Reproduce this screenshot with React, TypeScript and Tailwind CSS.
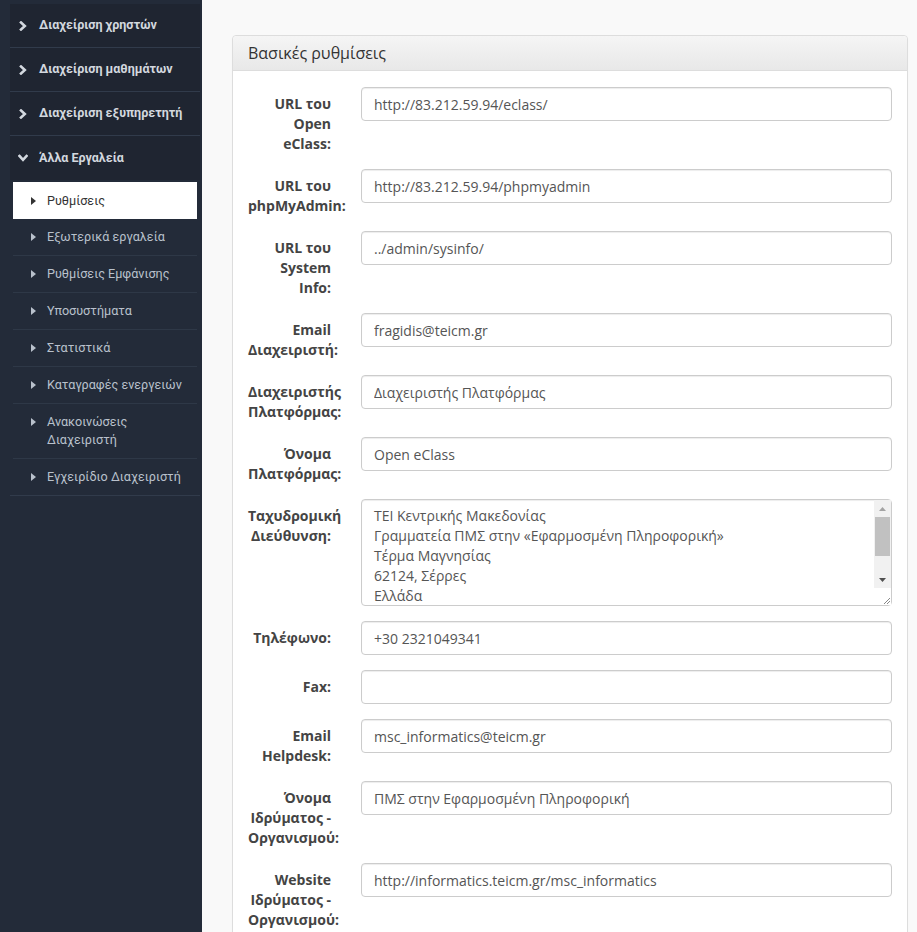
import React from "react";

const font = { fontFamily: '"Open Sans", "Noto Sans", sans-serif' };
const sideFont = { fontFamily: 'Roboto, "Open Sans", sans-serif' };

function Chevron({ down }: { down?: boolean }) {
  return (
    <svg width="10" height="10" viewBox="0 0 10 10" className="shrink-0">
      {down ? (
        <polyline points="1.5,3 5,6.8 8.5,3" fill="none" stroke="#d3d8df" strokeWidth="2.6" strokeLinecap="square" />
      ) : (
        <polyline points="3,1.5 6.8,5 3,8.5" fill="none" stroke="#d3d8df" strokeWidth="2.6" strokeLinecap="square" />
      )}
    </svg>
  );
}

function Caret({ dark }: { dark?: boolean }) {
  return (
    <svg width="5" height="8" viewBox="0 0 5 8" className="shrink-0 mt-[5px]">
      <polygon points="0,0 5,4 0,8" fill={dark ? "#333" : "#b9c1cc"} />
    </svg>
  );
}

const topItems = ["Διαχείριση χρηστών", "Διαχείριση μαθημάτων", "Διαχείριση εξυπηρετητή"];
const subItems = [
  "Ρυθμίσεις",
  "Εξωτερικά εργαλεία",
  "Ρυθμίσεις Εμφάνισης",
  "Υποσυστήματα",
  "Στατιστικά",
  "Καταγραφές ενεργειών",
  "Ανακοινώσεις Διαχειριστή",
  "Εγχειρίδιο Διαχειριστή",
];

const fields = [
  { label: "URL του Open eClass:", value: "http://83.212.59.94/eclass/" },
  { label: "URL του phpMyAdmin:", value: "http://83.212.59.94/phpmyadmin" },
  { label: "URL του System Info:", value: "../admin/sysinfo/" },
  { label: "Email Διαχειριστή:", value: "fragidis@teicm.gr" },
  { label: "Διαχειριστής Πλατφόρμας:", value: "Διαχειριστής Πλατφόρμας" },
  { label: "Όνομα Πλατφόρμας:", value: "Open eClass" },
  {
    label: "Ταχυδρομική Διεύθυνση:",
    value: "ΤΕΙ Κεντρικής Μακεδονίας\nΓραμματεία ΠΜΣ στην «Εφαρμοσμένη Πληροφορική»\nΤέρμα Μαγνησίας\n62124, Σέρρες\nΕλλάδα",
    area: true,
  },
  { label: "Τηλέφωνο:", value: "+30 2321049341" },
  { label: "Fax:", value: "" },
  { label: "Email Helpdesk:", value: "msc_informatics@teicm.gr" },
  { label: "Όνομα Ιδρύματος - Οργανισμού:", value: "ΠΜΣ στην Εφαρμοσμένη Πληροφορική" },
  { label: "Website Ιδρύματος - Οργανισμού:", value: "http://informatics.teicm.gr/msc_informatics" },
];

// fake classic scrollbar drawn over the textarea's right side
function FakeScrollbar() {
  return (
    <div className="absolute right-[1px] top-[1px] bottom-[1px] w-[17px] flex flex-col">
      <div className="flex-1 bg-[#f1f1f1] flex flex-col items-center">
        <div className="h-[17px] flex items-center justify-center">
          <svg width="7" height="4" viewBox="0 0 7 4">
            <polygon points="0,4 3.5,0 7,4" fill="#a3a3a3" />
          </svg>
        </div>
        <div className="w-[15px] h-[39px] bg-[#c1c1c1]" />
        <div className="flex-1" />
        <div className="h-[17px] flex items-center justify-center">
          <svg width="7" height="4" viewBox="0 0 7 4">
            <polygon points="0,0 3.5,4 7,0" fill="#505050" />
          </svg>
        </div>
      </div>
      <div className="h-[17px] bg-white flex items-end justify-end">
        <svg width="9" height="9" viewBox="0 0 9 9">
          <line x1="2" y1="8" x2="8" y2="2" stroke="#888" strokeWidth="1" />
          <line x1="5" y1="8" x2="8" y2="5" stroke="#888" strokeWidth="1" />
        </svg>
      </div>
    </div>
  );
}

export default function App() {
  return (
    <div className="flex h-[932px] w-[917px] overflow-hidden bg-[#f9f9f9]" style={font}>
      {/* sidebar */}
      <div className="w-[202px] shrink-0 bg-[#232b39] pt-[4px] px-[10px] pr-[2px]" style={sideFont}>
        {topItems.map((t) => (
          <div key={t} className="flex items-center h-[44px] bg-[#1f2531] border-b border-[#313b4b] pl-[8px] gap-[11px]">
            <Chevron />
            <span className="text-[12.5px] font-bold text-[#d3d8df]">{t}</span>
          </div>
        ))}
        <div className="flex items-center h-[44px] bg-[#1f2531] pl-[8px] gap-[11px]">
          <Chevron down />
          <span className="text-[12.5px] font-bold text-[#d3d8df]">Άλλα Εργαλεία</span>
        </div>
        <div className="pt-[2px] border-b border-[#313b4b]">
          {subItems.map((s, i) => (
            <div
              key={s}
              className={
                i === 0
                  ? "mx-[3px] flex gap-[11px] bg-white pl-[18px] pr-[8px] py-[10px] leading-[17px]"
                  : "mx-[3px] flex gap-[11px] border-b border-[#2e3847] last:border-b-0 pl-[18px] pr-[8px] py-[9px] leading-[18px]"
              }
            >
              <Caret dark={i === 0} />
              <span className={i === 0 ? "text-[12.6px] text-[#333]" : "text-[12.6px] text-[#b9c1cc]"}>
                {s === "Ανακοινώσεις Διαχειριστή" ? (
                  <>
                    Ανακοινώσεις
                    <br />
                    Διαχειριστή
                  </>
                ) : (
                  s
                )}
              </span>
            </div>
          ))}
        </div>
      </div>

      {/* main */}
      <div className="flex-1 pl-[30px] pt-[35px]">
        <div className="w-[676px] rounded-[4px] border border-[#dddddd] bg-white shadow-[0_1px_1px_rgba(0,0,0,0.05)]">
          <div className="h-[35px] flex items-center px-[15px] border-b border-[#dddddd] rounded-t-[4px] bg-gradient-to-b from-[#f5f5f5] to-[#e8e8e8]">
            <span className="text-[16px] text-[#333]">Βασικές ρυθμίσεις</span>
          </div>
          <div className="px-[15px] pt-[16px]">
            {fields.map((f) => (
              <div key={f.label} className="flex items-start mb-[15px]">
                <div className="w-[83px] shrink-0 pt-[7px] text-right text-[14px] font-bold leading-5 text-[#444]">
                  {f.label}
                </div>
                <div className="ml-[30px] flex-1">
                  {f.area ? (
                    <div className="relative">
                      <textarea
                        readOnly
                        defaultValue={f.value}
                        className="block w-full h-[107px] rounded-[4px] border border-[#cccccc] px-[12px] py-[6px] text-[14px] leading-5 text-[#555] shadow-[inset_0_1px_1px_rgba(0,0,0,0.075)] outline-none resize-none overflow-hidden"
                        style={font}
                      />
                      <FakeScrollbar />
                    </div>
                  ) : (
                    <input
                      readOnly
                      defaultValue={f.value}
                      className="block w-full h-[34px] rounded-[4px] border border-[#cccccc] px-[12px] text-[14px] text-[#555] shadow-[inset_0_1px_1px_rgba(0,0,0,0.075)] outline-none"
                      style={font}
                    />
                  )}
                </div>
              </div>
            ))}
          </div>
        </div>
      </div>
    </div>
  );
}
